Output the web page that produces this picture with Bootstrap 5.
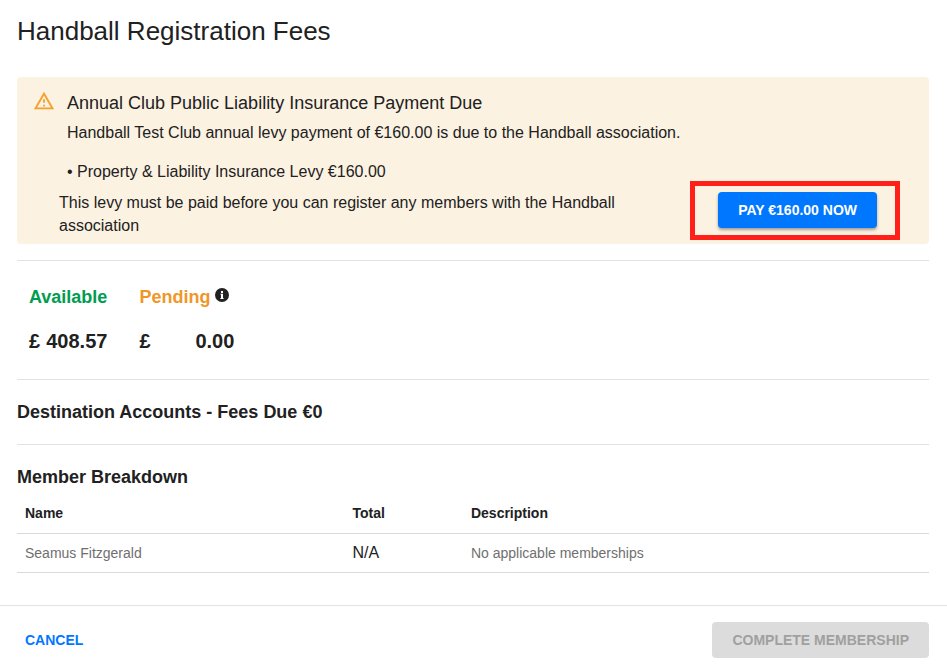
<!DOCTYPE html>
<html lang="en">
<head>
<meta charset="utf-8">
<meta name="viewport" content="width=device-width, initial-scale=1">
<title>Handball Registration Fees</title>
<link href="https://cdn.jsdelivr.net/npm/bootstrap@5.3.0/dist/css/bootstrap.min.css" rel="stylesheet">
<style>
  body { font-family: "Liberation Sans", Arial, sans-serif; font-size: 16px; line-height: 24px; color: #212121; background: #fff; }
  .page-inner { padding: 0 18px 32px 17px; }
  .page-title { font-size: 26px; line-height: 32px; padding: 15px 0 30px; }
  .levy-notice { background: #fcf2e1; border-radius: 4px; padding: 13px 0 0; }
  .notice-head { padding: 0 16px; gap: 12px; }
  .notice-title { font-size: 18px; line-height: 26px; }
  .notice-text { font-size: 16px; line-height: 24px; margin-top: 5px; }
  .levy-list { line-height: 24px; margin-top: 15px; }
  .notice-foot { padding: 0 29px 0 42px; }
  .levy-rule { line-height: 23px; padding: 0 0 7px; }
  .highlight-frame { border: 5px solid #ff2019; padding: 6px 18px 7px 23px; margin: -3px 0 4px; }
  .action-btn { font-size: 14px; line-height: 24px; font-weight: 700; border: 0; border-radius: 4px; padding: 6px 16px; text-transform: uppercase; white-space: nowrap; }
  .pay-btn, .pay-btn:hover { background: #0077ff; color: #fff; box-shadow: 0 2px 3px rgba(0,0,0,.35); padding: 6px 20px; }
  .cancel-btn, .cancel-btn:hover { color: #0077ff; padding-left: 8px; padding-right: 8px; }
  .complete-btn:disabled { background: #dcdcdc; color: #a0a0a0; opacity: 1; padding: 6px 20px; }
  .rule { border-top: 1px solid #e3e3e3; }
  .balances { padding: 24px 12px 26px; gap: 32px; }
  .balance-label { font-size: 18px; line-height: 24px; font-weight: 700; }
  .balance-value { font-size: 20px; line-height: 24px; font-weight: 700; margin-top: 20px; gap: 5px; }
  .available-label { color: #009d4f; }
  .pending-label { color: #f0962a; }
  .info-btn { line-height: 0; margin: 3px 5px; }
  .section-title { font-size: 18px; line-height: 24px; font-weight: 700; }
  .section-pad { padding: 20px 0; }
  .member-table { font-size: 14px; color: #212121; table-layout: fixed; }
  .member-table th, .member-table td { padding: 8px; line-height: 22px; border-bottom: 1px solid #d9d9d9; color: #212121; vertical-align: middle; }
  .member-table th { padding: 9px 8px; }
  .member-table td.muted-cell { color: #6f6f6f; }
  .member-table td.total-cell { font-size: 16px; }
  .col-name { width: 35.9%; }
  .col-total { width: 13%; }
  .page-footer { padding: 16px 18px 12px 17px; }
</style>
<script src="https://cdn.jsdelivr.net/npm/bootstrap@5.3.0/dist/js/bootstrap.bundle.min.js" defer></script>
</head>
<body>
<main class="page-inner">
  <h1 class="page-title fw-normal m-0">Handball Registration Fees</h1>

  <section class="levy-notice">
    <div class="notice-head d-flex align-items-start">
      <svg class="flex-shrink-0" width="22" height="22" viewBox="0 0 24 24" fill="#f5a02c" aria-hidden="true"><path d="M12 5.99 19.53 19H4.47L12 5.99M12 2 1 21h22L12 2zm1 14h-2v2h2v-2zm0-6h-2v4h2v-4z"/></svg>
      <div>
        <h2 class="notice-title fw-normal m-0">Annual Club Public Liability Insurance Payment Due</h2>
        <p class="notice-text mb-0">Handball Test Club annual levy payment of €160.00 is due to the Handball association.</p>
        <p class="levy-list mb-0">• Property &amp; Liability Insurance Levy €160.00</p>
      </div>
    </div>
    <div class="notice-foot d-flex justify-content-between align-items-end">
      <p class="levy-rule mb-0">This levy must be paid before you can register any members with the Handball association</p>
      <div class="highlight-frame flex-shrink-0">
        <button type="button" class="btn action-btn pay-btn d-block">Pay €160.00 now</button>
      </div>
    </div>
  </section>

  <div class="rule mt-3"></div>

  <section class="balances d-flex">
    <div>
      <div class="balance-label available-label">Available</div>
      <div class="balance-value d-flex justify-content-between"><span>£</span><span>408.57</span></div>
    </div>
    <div>
      <div class="d-flex align-items-start">
        <span class="balance-label pending-label">Pending</span>
        <button type="button" class="info-btn btn p-0 border-0" aria-label="About pending funds">
          <svg width="14" height="14" viewBox="0 0 14 14" aria-hidden="true"><circle cx="7" cy="7" r="7" fill="#212121"/><path fill="#fff" d="M6 3h2v2H6zM5.500 5.800H8V10h.6v1H5.400v-1H6V6.800h-.5z"/></svg>
        </button>
      </div>
      <div class="balance-value d-flex justify-content-between"><span>£</span><span>0.00</span></div>
    </div>
  </section>

  <section class="rule section-pad">
    <h2 class="section-title m-0">Destination Accounts - Fees Due €0</h2>
  </section>

  <section class="rule pt-3">
    <h2 class="section-title m-0 pt-1 pb-1">Member Breakdown</h2>
    <table class="member-table table mb-0">
      <colgroup><col class="col-name"><col class="col-total"><col></colgroup>
      <thead><tr><th scope="col">Name</th><th scope="col">Total</th><th scope="col">Description</th></tr></thead>
      <tbody><tr><td class="muted-cell">Seamus Fitzgerald</td><td class="total-cell">N/A</td><td class="muted-cell">No applicable memberships</td></tr></tbody>
    </table>
  </section>
</main>
<footer class="page-footer rule d-flex justify-content-between align-items-center">
  <button type="button" class="btn action-btn cancel-btn">Cancel</button>
  <button type="button" class="btn action-btn complete-btn" disabled>Complete membership</button>
</footer>
</body>
</html>
